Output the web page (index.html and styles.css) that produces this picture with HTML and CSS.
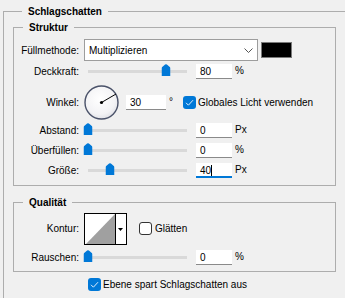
FILE: index.html
```html
<!DOCTYPE html>
<html lang="de">
<head>
  <meta charset="UTF-8" />
  <title>Schlagschatten</title>
  <link rel="stylesheet" href="styles.css">
</head>
<body>
  <fieldset class="group outer">
    <legend>Schlagschatten</legend>

    <fieldset class="group box">
      <legend>Struktur</legend>

      <div class="row row-blend">
        <span class="lbl">Füllmethode:</span>
        <div class="select">
          <span>Multiplizieren</span>
          <svg width="9" height="5" viewBox="0 0 9 5"><polyline points="0.5,0.5 4.5,4.5 8.5,0.5" fill="none" stroke="#555" stroke-width="1"/></svg>
        </div>
        <span class="swatch"></span>
      </div>

      <div class="row">
        <span class="lbl">Deckkraft:</span>
        <div class="slider"><span class="thumb" style="left:79%"><svg width="9" height="12" viewBox="0 0 9 12"><path d="M0 4.5 Q0 3.5 1 2.7 L3.6 0.5 Q4.5 -0.1 5.4 0.5 L8 2.7 Q9 3.5 9 4.5 V12 H0 Z" fill="#0078d7"/></svg></span></div>
        <span class="field">80</span>
        <span class="unit">%</span>
      </div>

      <div class="row row-angle">
        <span class="lbl">Winkel:</span>
        <svg class="dial" width="35" height="35" viewBox="0 0 35 35">
          <defs>
            <radialGradient id="dialFill" cx="45%" cy="40%" r="65%">
              <stop offset="0" stop-color="#ffffff"/>
              <stop offset="0.7" stop-color="#f3f3f5"/>
              <stop offset="1" stop-color="#dcdde3"/>
            </radialGradient>
          </defs>
          <circle cx="17.5" cy="17.5" r="16.5" fill="url(#dialFill)" stroke="#4a5269" stroke-width="1.4"/>
          <line x1="17.5" y1="17.5" x2="32" y2="9" stroke="#000" stroke-width="1"/>
          <circle cx="17.5" cy="17.5" r="1.6" fill="#000"/>
        </svg>
        <span class="field wide">30</span>
        <span class="unit deg">°</span>
        <span class="check angle-check">
          <svg width="13" height="13" viewBox="0 0 13 13"><rect x="0" y="0" width="13" height="13" rx="3" fill="#0078d7"/><polyline points="3,6.8 5.4,9.2 10,4.2" fill="none" stroke="#dfeefc" stroke-width="1"/></svg>
          Globales Licht verwenden
        </span>
      </div>

      <div class="row row-after-angle">
        <span class="lbl">Abstand:</span>
        <div class="slider"><span class="thumb" style="left:0%"><svg width="9" height="12" viewBox="0 0 9 12"><path d="M0 4.5 Q0 3.5 1 2.7 L3.6 0.5 Q4.5 -0.1 5.4 0.5 L8 2.7 Q9 3.5 9 4.5 V12 H0 Z" fill="#0078d7"/></svg></span></div>
        <span class="field">0</span>
        <span class="unit">Px</span>
      </div>

      <div class="row">
        <span class="lbl">Überfüllen:</span>
        <div class="slider"><span class="thumb" style="left:0%"><svg width="9" height="12" viewBox="0 0 9 12"><path d="M0 4.5 Q0 3.5 1 2.7 L3.6 0.5 Q4.5 -0.1 5.4 0.5 L8 2.7 Q9 3.5 9 4.5 V12 H0 Z" fill="#0078d7"/></svg></span></div>
        <span class="field">0</span>
        <span class="unit">%</span>
      </div>

      <div class="row">
        <span class="lbl">Größe:</span>
        <div class="slider"><span class="thumb" style="left:22%"><svg width="9" height="12" viewBox="0 0 9 12"><path d="M0 4.5 Q0 3.5 1 2.7 L3.6 0.5 Q4.5 -0.1 5.4 0.5 L8 2.7 Q9 3.5 9 4.5 V12 H0 Z" fill="#0078d7"/></svg></span></div>
        <span class="field focus">40<span class="caret"></span></span>
        <span class="unit">Px</span>
      </div>
    </fieldset>

    <fieldset class="group box quality">
      <legend>Qualität</legend>

      <div class="row row-contour">
        <span class="lbl">Kontur:</span>
        <svg class="contour" width="43" height="32" viewBox="0 0 43 32">
          <rect x="0.5" y="0.5" width="42" height="31" fill="#fff" stroke="#000"/>
          <polygon points="2,31 31,1 31,31" fill="#a0a0a0"/>
          <line x1="31.5" y1="1" x2="31.5" y2="31" stroke="#000"/>
          <polygon points="34,15 39,15 36.5,18" fill="#000"/>
        </svg>
        <span class="check smooth-check">
          <svg width="13" height="13" viewBox="0 0 13 13"><rect x="0.5" y="0.5" width="12" height="12" rx="2.5" fill="#fff" stroke="#333"/></svg>
          Glätten
        </span>
      </div>

      <div class="row row-noise">
        <span class="lbl">Rauschen:</span>
        <div class="slider"><span class="thumb" style="left:0%"><svg width="9" height="12" viewBox="0 0 9 12"><path d="M0 4.5 Q0 3.5 1 2.7 L3.6 0.5 Q4.5 -0.1 5.4 0.5 L8 2.7 Q9 3.5 9 4.5 V12 H0 Z" fill="#0078d7"/></svg></span></div>
        <span class="field">0</span>
        <span class="unit">%</span>
      </div>
    </fieldset>

    <span class="check footer-check">
      <svg width="13" height="13" viewBox="0 0 13 13"><rect x="0" y="0" width="13" height="13" rx="3" fill="#0078d7"/><polyline points="3,6.8 5.4,9.2 10,4.2" fill="none" stroke="#dfeefc" stroke-width="1"/></svg>
      Ebene spart Schlagschatten aus
    </span>
  </fieldset>
</body>
</html>
```

FILE: styles.css
```css
* {
  box-sizing: border-box;
}

html, body {
  margin: 0;
}

body {
  width: 345px;
  height: 298px;
  overflow: hidden;
  background: #f0f0f0;
  color: #000;
  font-family: "Liberation Sans", Arial, sans-serif;
  font-size: 10px;
}

/* group boxes */
.group {
  margin: 0;
  padding: 0;
  min-width: 0;
  border: 1px solid #adadad;
}

.group > legend {
  margin-left: 9px;
  padding: 0 6px;
  font-weight: bold;
  line-height: 15px;
}

.outer {
  margin: 4px 0 0 3px;
  padding: 1px 0 20px 9px;
  border-right: 0;
  border-bottom: 0;
}

.box {
  width: 323px;
  padding: 4px 0 5px;
}

.quality {
  margin-top: 9px;
  padding: 3px 0 4px;
}

/* rows */
.row {
  display: flex;
  align-items: center;
  height: 20px;
}

.row-blend { height: 22px; }
.row-angle { height: 34px; margin-top: 4px; }
.row-after-angle { margin-top: 1px; }
.row-contour { height: 31px; }
.row-noise { margin-top: 3px; }

.lbl {
  flex: none;
  width: 65px;
  margin-right: 5px;
  text-align: right;
}

/* dropdown + colour */
.select {
  display: flex;
  align-items: center;
  justify-content: space-between;
  width: 174px;
  height: 22px;
  padding: 0 4px 0 4px;
  background: #fff;
  border: 1px solid #9d9d9d;
}

.swatch {
  width: 31px;
  height: 16px;
  margin-left: 3px;
  background: #000;
  border: 1px solid #7a7a7a;
}

/* sliders */
.slider {
  position: relative;
  flex: none;
  width: 99px;
  height: 3px;
  margin-left: 4px;
  background: #d9d9d9;
}

.thumb {
  position: absolute;
  top: -6px;
  width: 9px;
  height: 12px;
  transform: translateX(-50%);
}

.thumb svg {
  display: block;
}

/* number fields */
.field {
  flex: none;
  width: 36px;
  height: 15px;
  margin-left: 9px;
  padding-left: 4px;
  line-height: 15px;
  background: #fff;
  border-bottom: 1px solid #8a8a8a;
}

.field.wide {
  width: 40px;
  margin-left: 7px;
}

.field.focus {
  border-bottom: 2px solid #0078d7;
}

.caret {
  display: inline-block;
  width: 1px;
  height: 11px;
  background: #000;
  vertical-align: -2px;
}

.unit {
  margin-left: 3px;
  margin-bottom: 2px;
}

.unit.deg {
  align-self: flex-start;
  margin-top: 11px;
}

.dial {
  display: block;
  flex: none;
}

/* checkboxes */
.check {
  display: flex;
  align-items: center;
  gap: 2px;
  white-space: nowrap;
}

.check svg {
  flex: none;
  display: block;
}

.angle-check { margin-left: 10px; }
.smooth-check { margin-left: 12px; gap: 3px; }

.contour {
  display: block;
  flex: none;
}

.footer-check {
  height: 13px;
  margin: 6px 0 0 75px;
}
```
